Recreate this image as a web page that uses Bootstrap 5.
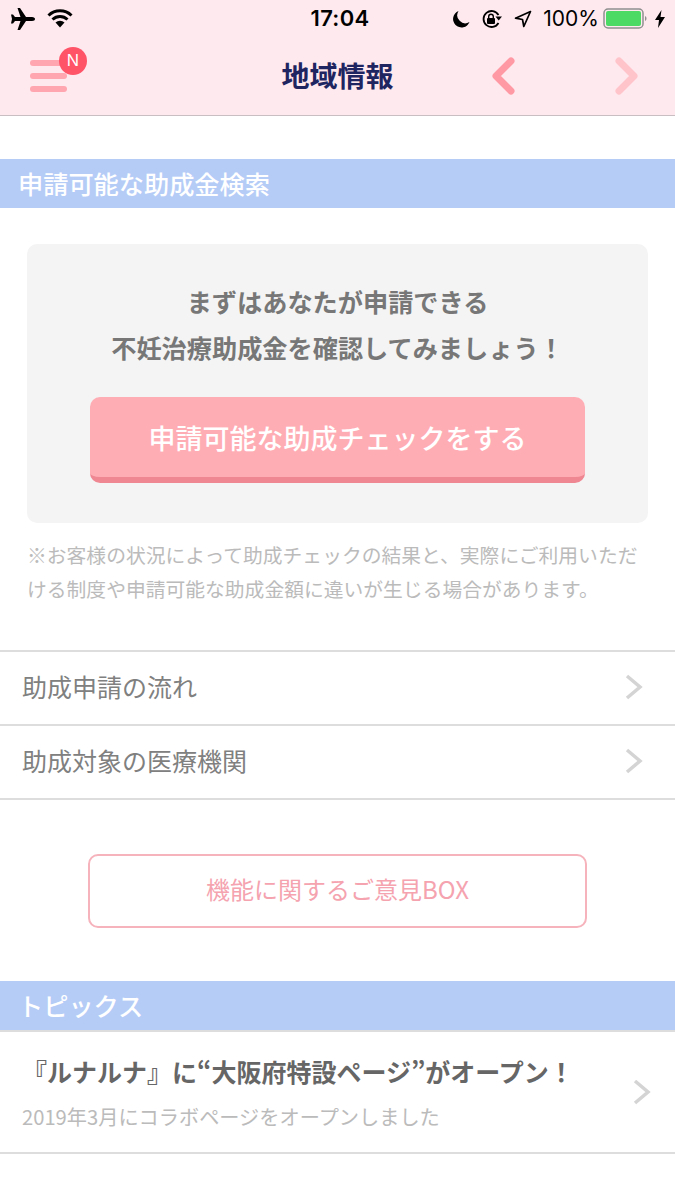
<!DOCTYPE html>
<html lang="ja">
<head>
  <meta charset="utf-8">
  <meta name="viewport" content="width=device-width, initial-scale=1">
  <title>地域情報</title>
  <link href="https://cdn.jsdelivr.net/npm/bootstrap@5.3.3/dist/css/bootstrap.min.css" rel="stylesheet">
  <style>
    body {
      font-family: "Noto Sans CJK JP", "Noto Sans", sans-serif;
      background: #fff;
      color: #777;
    }

    .top-area {
      background: #fee9ee;
      height: 116px;
      border-bottom: 1px solid #c9bfc3;
    }

    .status-row {
      height: 37px;
      padding: 0 10px;
      color: #000;
      font-family: Inter, "Liberation Sans", sans-serif;
      font-size: 21px;
    }

    .status-side {
      width: 240px;
    }

    .status-time {
      font-size: 22px;
      font-weight: 600;
      letter-spacing: .3px;
      margin-left: 5px;
    }

    .status-gap {
      margin-left: 11px;
    }

    .title-row {
      height: 78px;
      padding: 0 36px 0 30px;
    }

    .menu-btn {
      width: 56px;
      height: 46px;
      padding-top: 7px;
    }

    .menu-bar {
      width: 37px;
      height: 6px;
      border-radius: 3px;
      background: #ffa6b0;
      margin-bottom: 7px;
    }

    .menu-badge {
      top: -6px;
      left: 29px;
      width: 28px;
      height: 28px;
      border-radius: 50%;
      background: #ff5368;
      color: #fff;
      font-family: "Liberation Sans", sans-serif;
      font-size: 17px;
      line-height: 28px;
      text-align: center;
    }

    .page-title {
      font-size: 28px;
      font-weight: 700;
      color: #1f2560;
      line-height: 1;
      margin: -2px 0 0;
      position: absolute;
      left: 0;
      right: 0;
      text-align: center;
      pointer-events: none;
    }

    .arrow-pair {
      gap: 100px;
    }

    .section-head {
      background: #b5ccf7;
      color: #fff;
      font-size: 25.2px;
      font-weight: 500;
      height: 49px;
      line-height: 49px;
      padding-left: 18px;
    }

    .section-first {
      margin-top: 43px;
    }

    .check-box {
      margin: 36px 27px 0;
      height: 279px;
      background: #f4f4f4;
      border-radius: 10px;
      padding-top: 34px;
    }

    .check-lead {
      font-size: 25.2px;
      font-weight: 700;
      line-height: 46px;
      color: #777;
      margin: 0 0 27px;
    }

    .check-btn {
      width: 495px;
      height: 86px;
      background: #ffadb5;
      border-radius: 10px;
      border: 0;
      border-bottom: 6px solid #ee8792;
      color: #fff;
      font-size: 27px;
      font-weight: 500;
      padding: 2px 0 0;
    }

    .check-note {
      margin: 15px 27px 0 27px;
      font-size: 19.8px;
      line-height: 34px;
      color: #bbb;
    }

    .link-rows {
      margin-top: 44px;
      border-top: 2px solid #ddd;
    }

    .link-row {
      height: 74px;
      border-bottom: 2px solid #ddd;
      padding: 0 32px 2px 22px;
      font-size: 25px;
      color: #808080;
    }

    .opinion-wrap {
      padding: 54px 0 53px;
    }

    .opinion-btn {
      width: 499px;
      height: 74px;
      border: 2px solid #f6b3bc;
      border-radius: 10px;
      background: #fff;
      color: #f5a3af;
      font-size: 24px;
      padding: 0 0 4px;
    }

    .topic-row {
      height: 124px;
      border-top: 2px solid #ddd;
      border-bottom: 2px solid #ddd;
      padding: 0 24px 0 22px;
    }

    .topic-title {
      font-size: 25px;
      font-weight: 700;
      color: #666;
      line-height: 36px;
      margin: 0 0 14px;
      white-space: nowrap;
    }

    .topic-sub {
      font-size: 20.2px;
      line-height: 28px;
      color: #bbb;
      margin: 0;
    }
  </style>
</head>
<body>

<div class="top-area">
  <!-- status bar -->
  <div class="status-row d-flex align-items-center justify-content-between">
    <div class="status-side d-flex align-items-center">
      <svg width="26" height="22" viewBox="0 0 26 22"><path d="M25 11c0-1-1-2-3-2h-6L10 0H7.500l3 9H5L3 6.500H1L2 11l-1 4.500h2L5 13h5.500l-3 9H10l6-9h6c2 0 3-1 3-2z" fill="#000"/></svg>
      <svg class="status-gap" width="26" height="19" viewBox="0 0 26 19"><path d="M1.500 6.500a16.500 16.500 0 0 1 23 0M5.500 10.500a11 11 0 0 1 15 0" fill="none" stroke="#000" stroke-width="3"/><path d="M8.500 13.500a6.500 6.500 0 0 1 9 0L13 18.500z" fill="#000"/></svg>
    </div>
    <div class="status-time">17:04</div>
    <div class="status-side d-flex align-items-center justify-content-end">
      <svg width="18" height="18" viewBox="0 0 18 18"><path d="M6.500 1a8.500 8.500 0 1 0 11 11A8 8 0 0 1 6.500 1z" fill="#000"/></svg>
      <svg class="status-gap" width="22" height="20" viewBox="0 0 22 20"><path d="M17.500 6A8 8 0 1 0 17.500 14" fill="none" stroke="#000" stroke-width="1.800"/><path d="M14.500 7.500h6.500L17.700 11.500z" fill="#000"/><rect x="6" y="9" width="8" height="6" rx="1" fill="#000"/><path d="M7.700 9V7.500a2.300 2.300 0 0 1 4.600 0V9" fill="none" stroke="#000" stroke-width="1.400"/></svg>
      <svg class="status-gap" width="18" height="18" viewBox="0 0 18 18"><path d="M16.500 1.500L1.500 8.200l7 1.300 1.300 7z" fill="none" stroke="#000" stroke-width="1.700" stroke-linejoin="round"/></svg>
      <span class="status-gap">100%</span>
      <svg class="ms-1" width="44" height="21" viewBox="0 0 44 21"><rect x="1" y="1" width="39" height="19" rx="4" fill="none" stroke="#8f8f8f" stroke-width="1.500"/><rect x="3" y="3" width="35" height="15" rx="2" fill="#4cd964"/><path d="M42 8c1 .5 1.500 1.500 1.500 2.500S43 12.500 42 13z" fill="#8f8f8f"/></svg>
      <svg class="ms-2" width="10" height="18" viewBox="0 0 10 18"><path d="M6.500 0L0 10h4l-1 8 7-11H5.500z" fill="#000"/></svg>
    </div>
  </div>
  <!-- title bar -->
  <div class="title-row d-flex align-items-center justify-content-between position-relative">
    <h1 class="page-title">地域情報</h1>
    <div class="menu-btn position-relative">
      <div class="menu-bar"></div>
      <div class="menu-bar"></div>
      <div class="menu-bar"></div>
      <div class="menu-badge position-absolute">N</div>
    </div>
    <div class="arrow-pair d-flex align-items-center">
      <svg width="24" height="38" viewBox="0 0 24 38"><path d="M20 4L5 19l15 15" fill="none" stroke="#ff9aa5" stroke-width="7" stroke-linecap="round" stroke-linejoin="round"/></svg>
      <svg width="24" height="38" viewBox="0 0 24 38"><path d="M4 4l15 15L4 34" fill="none" stroke="#ffc4ca" stroke-width="7" stroke-linecap="round" stroke-linejoin="round"/></svg>
    </div>
  </div>
</div>

<div class="section-head section-first">申請可能な助成金検索</div>

<div class="check-box text-center">
  <p class="check-lead">まずはあなたが申請できる<br>不妊治療助成金を確認してみましょう！</p>
  <button type="button" class="btn check-btn">申請可能な助成チェックをする</button>
</div>
<p class="check-note mb-0">※お客様の状況によって助成チェックの結果と、実際にご利用いただける制度や申請可能な助成金額に違いが生じる場合があります。</p>

<div class="link-rows">
  <div class="link-row d-flex align-items-center justify-content-between">
    <span>助成申請の流れ</span>
    <svg width="18" height="26" viewBox="0 0 18 26"><path d="M2 2l13 11L2 24" fill="none" stroke="#d4d4d4" stroke-width="3.500"/></svg>
  </div>
  <div class="link-row d-flex align-items-center justify-content-between">
    <span>助成対象の医療機関</span>
    <svg width="18" height="26" viewBox="0 0 18 26"><path d="M2 2l13 11L2 24" fill="none" stroke="#d4d4d4" stroke-width="3.500"/></svg>
  </div>
</div>

<div class="opinion-wrap text-center">
  <button type="button" class="btn opinion-btn">機能に関するご意見BOX</button>
</div>

<div class="section-head">トピックス</div>
<div class="topic-row d-flex align-items-center justify-content-between">
  <div>
    <p class="topic-title">『ルナルナ』に“大阪府特設ページ”がオープン！</p>
    <p class="topic-sub">2019年3月にコラボページをオープンしました</p>
  </div>
  <svg width="18" height="26" viewBox="0 0 18 26"><path d="M2 2l13 11L2 24" fill="none" stroke="#d4d4d4" stroke-width="3.500"/></svg>
</div>

<script src="https://cdn.jsdelivr.net/npm/bootstrap@5.3.3/dist/js/bootstrap.bundle.min.js"></script>
</body>
</html>
